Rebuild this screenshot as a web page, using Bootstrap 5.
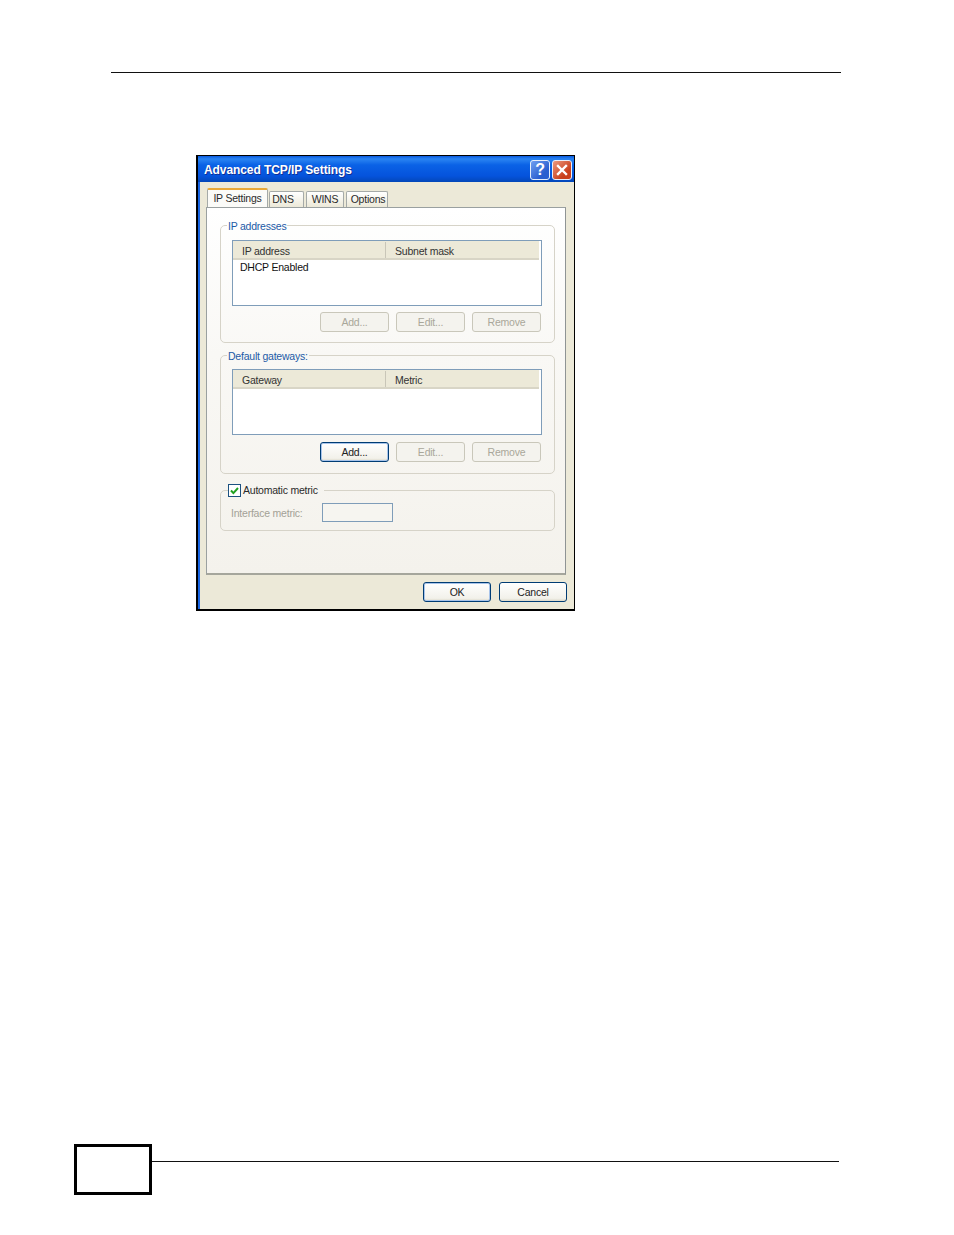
<!DOCTYPE html>
<html lang="en">
<head>
<meta charset="utf-8">
<title>Advanced TCP/IP Settings</title>
<link rel="stylesheet" href="https://cdn.jsdelivr.net/npm/bootstrap@5.3.0/dist/css/bootstrap.min.css">
<style>
html, body { background:#fff; }
.sheet { height:1235px; }
.top-rule { margin:72px 113px 0 111px; border:0; border-top:1px solid #111; opacity:1; }
.win { width:379px; height:456px; margin:82px 0 0 196px; border:solid #000; border-width:1px 1px 2px 2px; background:#ece9d8; font-family:"Liberation Sans",Arial,sans-serif; font-size:10.5px; letter-spacing:-.22px; line-height:13px; color:#2a2a2a; }
.win-title { height:26px; padding:2px 2px 0 6px; color:#fff; font:bold 12px/14px "Liberation Sans",sans-serif; letter-spacing:-.08px; text-shadow:1px 1px 0 #0f2f96; background:linear-gradient(180deg,#0a5be0 0,#2a84f2 3px,#0a62e6 9px,#0553dc 20px,#0347b8 100%); }
.cap-btn { width:20px; height:20px; margin-left:2px; border:1px solid #e8f0fb; border-radius:3px; }
.cap-help { background:linear-gradient(135deg,#6f9ff0,#2a5fd0 70%); color:#fff; font:bold 16px/18px "Liberation Sans",sans-serif; text-align:center; text-shadow:none; }
.cap-close { background:linear-gradient(135deg,#ec9a80,#c9401c 70%); }
.win-body { border-left:2px solid #1a66e4; padding:6px 7px 0 6px; height:calc(100% - 26px); }
.tabstrip { height:19px; padding-left:1px; }
.xp-tab { height:16px; margin-right:2px; padding-top:1px; border:1px solid #a5aaa8; border-bottom:0; border-radius:2px 2px 0 0; background:linear-gradient(180deg,#fff,#ece9d8); text-align:center; }
.xp-tab.on { height:19px; margin-right:1px; padding-top:2px; border-top:2px solid #f0a830; background:#fbfbf8; border-color:#e8a838 #a5aaa8 #fbfbf8; }
.t1 { width:61px; } .t2 { width:35px; padding-right:7px; } .t3 { width:38px; } .t4 { width:42px; padding-left:2px; }
.panel-xp { height:368px; margin-right:1px; padding:11px 10px 0 13px; border:1px solid #9aa0a0; border-right-color:#8f9494; border-bottom:2px solid #a5a69c; background:linear-gradient(180deg,#fff 0,#f9f8f5 40%,#f4f2ec 100%); }
.grp { min-width:0; margin:0 0 6px; padding:8px 12px 10px 11px; border:1px solid #d6d3c8; border-radius:5px; }
.grp.g2 { padding:7px 12px 11px 11px; }
.grp.g3 { margin:10px 0 0; padding:6px 0 8px 10px; }
.grp legend { float:none; width:auto; height:13px; margin:0 0 0 -5px; padding:0 1px; font-size:10.5px; line-height:15px; color:#1c5aa6; }
.grp.g3 legend { margin-left:-3px; padding:0 6px 0 0; line-height:13px; color:#2a2a2a; }
.lst { height:66px; border:1px solid #7f9db9; background:#fff; }
.lst-head { height:19px; margin-right:2px; padding-top:1px; background:#ece9d8; border-bottom:2px solid #d8d5c6; line-height:19px; color:#333; }
.h1col { width:153px; height:16px; padding-left:9px; border-right:1px solid #c9c6b8; }
.h2col { padding-left:9px; }
.lst-row { padding:1px 0 0 7px; color:#111; }
.btn-row { margin:6px 1px 0 0; gap:7px; }
.g2 .btn-row { margin-top:7px; }
.xp-btn { width:69px; height:20px; padding:0; border:1px solid #c9c7ba; border-radius:3px; background:#f4f3ee; color:#a9a79a; font:inherit; letter-spacing:inherit; line-height:18px; }
.xp-btn.live { border-color:#003c74; color:#222; background:linear-gradient(180deg,#fff,#f2f1ea 85%,#dcd8c8); box-shadow:inset 0 0 0 1px #a8c4ea; }
.xp-btn.plain { box-shadow:none; }
.foot-row { margin-top:7px; gap:8px; }
.foot-row .xp-btn { width:68px; }
.chk { width:13px; height:13px; margin-right:2px; border:1px solid #1c5180; background:#fff; }
.metric-lbl { width:91px; padding-top:1px; color:#a3a196; }
.metric-box { width:71px; height:19px; border:1px solid #7f9db9; background:#f6f5f0; }
.foot-wrap { padding:0 115px 40px 74px; }
.foot-box { width:78px; height:51px; border:3px solid #000; }
.foot-rule { margin-top:17px; border-top:1px solid #111; height:0; }
</style>
</head>
<body>
<div class="sheet d-flex flex-column">
  <hr class="top-rule">
  <div class="win">
    <div class="win-title d-flex align-items-center justify-content-between">
      <span>Advanced TCP/IP Settings</span>
      <span class="d-flex">
        <span class="cap-btn cap-help">?</span>
        <span class="cap-btn cap-close d-flex align-items-center justify-content-center">
          <svg width="12" height="12" viewBox="0 0 12 12"><path d="M2 2l8 8M10 2l-8 8" stroke="#fff" stroke-width="2.4" stroke-linecap="square"/></svg>
        </span>
      </span>
    </div>
    <div class="win-body">
      <div class="tabstrip d-flex align-items-end">
        <div class="xp-tab on t1">IP Settings</div>
        <div class="xp-tab t2">DNS</div>
        <div class="xp-tab t3">WINS</div>
        <div class="xp-tab t4">Options</div>
      </div>
      <div class="panel-xp">
        <fieldset class="grp">
          <legend>IP addresses</legend>
          <div class="lst">
            <div class="lst-head d-flex"><div class="h1col">IP address</div><div class="h2col">Subnet mask</div></div>
            <div class="lst-row">DHCP Enabled</div>
          </div>
          <div class="btn-row d-flex justify-content-end">
            <button class="xp-btn" type="button" disabled>Add...</button>
            <button class="xp-btn" type="button" disabled>Edit...</button>
            <button class="xp-btn" type="button" disabled>Remove</button>
          </div>
        </fieldset>
        <fieldset class="grp g2">
          <legend>Default gateways:</legend>
          <div class="lst">
            <div class="lst-head d-flex"><div class="h1col">Gateway</div><div class="h2col">Metric</div></div>
          </div>
          <div class="btn-row d-flex justify-content-end">
            <button class="xp-btn live" type="button">Add...</button>
            <button class="xp-btn" type="button" disabled>Edit...</button>
            <button class="xp-btn" type="button" disabled>Remove</button>
          </div>
        </fieldset>
        <fieldset class="grp g3">
          <legend class="d-flex align-items-center">
            <span class="chk d-flex align-items-center justify-content-center">
              <svg width="11" height="11" viewBox="0 0 11 11"><path d="M2 5.5l2.4 2.6L9 3" fill="none" stroke="#21a121" stroke-width="2"/></svg>
            </span>Automatic metric
          </legend>
          <div class="d-flex align-items-center">
            <span class="metric-lbl">Interface metric:</span>
            <span class="metric-box"></span>
          </div>
        </fieldset>
      </div>
      <div class="foot-row d-flex justify-content-end">
        <button class="xp-btn live" type="button">OK</button>
        <button class="xp-btn live plain" type="button">Cancel</button>
      </div>
    </div>
  </div>
  <div class="foot-wrap d-flex mt-auto">
    <div class="foot-box"></div>
    <div class="foot-rule flex-grow-1"></div>
  </div>
</div>
<script src="https://cdn.jsdelivr.net/npm/bootstrap@5.3.0/dist/js/bootstrap.bundle.min.js"></script>
</body>
</html>
